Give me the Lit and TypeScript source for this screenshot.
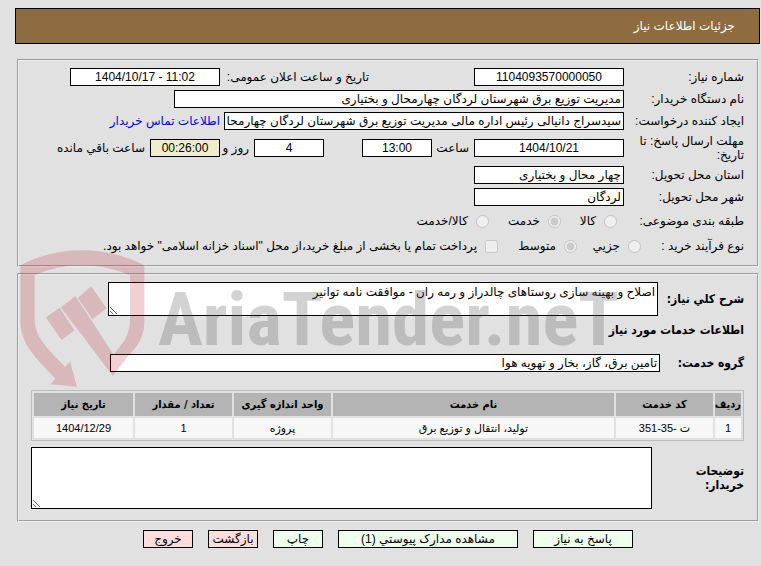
import { LitElement, html, css } from "lit";
import { customElement } from "lit/decorators.js";

const services = [
  { row: "1", code: "ت -35-351", name: "تولید، انتقال و توزیع برق", unit: "پروژه", qty: "1", date: "1404/12/29" },
];

@customElement("app-root")
export class AppRoot extends LitElement {
  static styles = css`
    :host {
      display: block;
      direction: rtl;
      position: relative;
      min-height: 100vh;
      box-sizing: border-box;
      padding-top: 8px;
      background: #e1e1e1;
      color: #000;
      font: 12px/14px Tahoma, "Liberation Sans", "DejaVu Sans", sans-serif;
    }
    * { box-sizing: border-box; }
    header {
      margin: 0 1px 15px 15px;
      padding: 0 24px;
      height: 36px;
      border: 1px solid #000;
      background: #8f6b40;
      color: #fff;
      display: flex;
      align-items: center;
    }
    h1, h2 { margin: 0; font-size: 12px; font-weight: normal; }
    h2, .strong, th {
      font-weight: bold;
      font-family: Tahoma, "DejaVu Sans Condensed", sans-serif;
    }
    fieldset {
      margin: 0 2px 6px 17px;
      padding: 5px 13px 7px 12px;
      border: 2px groove #f0f0f0;
      min-width: 0;
    }
    .row { display: flex; align-items: center; height: 22px; }
    .tall { height: 32px; }
    .choice { height: 26px; }
    .process { height: 24px; }
    .label { flex: none; width: 120px; padding-left: 8px; }
    .process .label { width: 96px; }
    input[type="text"], textarea, button {
      font: inherit;
      color: #000;
      border: 1px solid #000;
      border-radius: 0;
      margin: 0;
      background: #fff;
    }
    input[type="text"] { height: 18px; padding: 0 2px; min-width: 0; flex: none; width: 150px; }
    .center { text-align: center; }
    input.short { width: 70px; }
    input.wide { width: 450px; }
    input.creator { width: 400px; }
    .row input.remain { background: #eeeecc; }
    .published { width: 149px; margin-right: 105px; flex: none; }
    .unit { flex: none; padding: 0 5px; width: 42px; white-space: nowrap; }
    .row input.days { margin-right: 38px; }
    .days-unit { width: 34px; }
    .rest { padding: 0 5px; white-space: nowrap; }
    a { color: #0000ee; text-decoration: none; margin-right: 4px; white-space: nowrap; }
    .options { flex: 1; display: grid; grid-template-columns: 56px 72px 1fr; }
    .process .options { grid-template-columns: 64px 79px 1fr; }
    .option { display: flex; align-items: center; gap: 8px; padding-right: 7px; white-space: nowrap; }
    .option input { margin: 0; width: 13px; height: 13px; flex: none; }
    .need { padding-top: 7px; padding-bottom: 11px; margin-bottom: 8px; }
    .strong { flex: none; }
    .summary { display: flex; align-items: center; }
    .summary .strong { width: 86px; white-space: nowrap; }
    .summary textarea { width: 550px; height: 34px; }
    textarea { display: block; padding: 2px; resize: both; }
    .group { display: flex; align-items: center; margin: 17px 0 18px; }
    .group .strong { width: 84px; }
    .group input[type="text"] { width: 550px; }
    h2 { margin-top: 7px; }
    table {
      width: 100%;
      table-layout: fixed;
      border: 1px solid #bbb;
      border-collapse: separate;
      border-spacing: 2px;
      font-size: 11px;
      text-align: center;
      margin-bottom: 6px;
    }
    th { height: 23px; padding: 0; background: #b4b4b4; white-space: nowrap; }
    td { height: 20px; padding: 0; background: #f7f7f7; }
    .c-row { width: 26px; }
    .c-mid { width: 97px; }
    .c-date { width: 99px; }
    .notes { display: flex; align-items: center; }
    .notes .strong { width: 92px; padding-left: 36px; }
    .notes textarea { flex: 1; height: 62px; }
    .actions { display: flex; justify-content: center; gap: 15px; margin: 0 2px 0 17px; }
    button { width: 50px; height: 18px; padding: 0; background: #eeffee; white-space: nowrap; }
    button.answer { width: 100px; }
    button.files { width: 180px; }
    button.leave { background: #ffdddd; }
    .watermark {
      position: absolute;
      left: 17px;
      top: 247px;
      display: flex;
      align-items: center;
      direction: ltr;
      pointer-events: none;
    }
    .watermark svg { width: 133px; height: 143px; fill: #b81c28; opacity: 0.2; }
    .brand {
      margin-left: 8px;
      font: bold 75px/80px "Liberation Sans Narrow", "Roboto Condensed", "Open Sans Condensed", Roboto, sans-serif;
      color: #555;
      opacity: 0.26;
    }
  `;

  render() {
    return html`
      <header><h1>جزئیات اطلاعات نیاز</h1></header>
      <fieldset>
        <div class="row">
          <label class="label" for="num">شماره نیاز:</label>
          <input id="num" class="center" type="text" readonly value="1104093570000050">
          <label class="published" for="pub">تاریخ و ساعت اعلان عمومی:</label>
          <input id="pub" class="center" type="text" dir="ltr" readonly value="1404/10/17 - 11:02">
        </div>
        <div class="row">
          <label class="label" for="org">نام دستگاه خریدار:</label>
          <input id="org" class="wide" type="text" readonly value="مدیریت توزیع برق شهرستان لردگان چهارمحال و بختیاری">
        </div>
        <div class="row">
          <label class="label" for="creator">ایجاد کننده درخواست:</label>
          <input id="creator" class="creator" type="text" readonly value="سیدسراج دانیالی رئیس اداره مالی مدیریت توزیع برق شهرستان لردگان چهارمحال و بختیاری">
          <a href="#contact">اطلاعات تماس خریدار</a>
        </div>
        <div class="row tall">
          <label class="label" for="deadline">مهلت ارسال پاسخ: تا تاریخ:</label>
          <input id="deadline" class="center" type="text" readonly value="1404/10/21">
          <label class="unit" for="hour">ساعت</label>
          <input id="hour" class="center short" type="text" readonly value="13:00">
          <input id="days" class="center short days" type="text" readonly value="4">
          <label class="unit days-unit" for="days">روز و</label>
          <input id="remain" class="center short remain" type="text" readonly value="00:26:00">
          <label class="rest" for="remain">ساعت باقي مانده</label>
        </div>
        <div class="row">
          <label class="label" for="province">استان محل تحویل:</label>
          <input id="province" type="text" readonly value="چهار محال و بختیاری">
        </div>
        <div class="row">
          <label class="label" for="city">شهر محل تحویل:</label>
          <input id="city" type="text" readonly value="لردگان">
        </div>
        <div class="row choice">
          <span class="label">طبقه بندی موضوعی:</span>
          <div class="options">
            <label class="option"><input type="radio" name="kind" disabled>کالا</label>
            <label class="option"><input type="radio" name="kind" disabled checked>خدمت</label>
            <label class="option"><input type="radio" name="kind" disabled>کالا/خدمت</label>
          </div>
        </div>
        <div class="row process">
          <span class="label">نوع فرآیند خرید :</span>
          <div class="options">
            <label class="option"><input type="radio" name="process" disabled>جزیي</label>
            <label class="option"><input type="radio" name="process" disabled checked>متوسط</label>
            <label class="option"><input type="checkbox" disabled>پرداخت تمام یا بخشی از مبلغ خرید،از محل "اسناد خزانه اسلامی" خواهد بود.</label>
          </div>
        </div>
      </fieldset>
      <fieldset class="need">
        <div class="summary">
          <label class="strong" for="desc">شرح کلي نیاز:</label>
          <textarea id="desc" readonly .value=${"اصلاح و بهینه سازی روستاهای چالدراز و رمه ران - موافقت نامه توانیر"}></textarea>
        </div>
        <h2>اطلاعات خدمات مورد نیاز</h2>
        <div class="group">
          <label class="strong" for="grp">گروه خدمت:</label>
          <input id="grp" type="text" readonly value="تامین برق، گاز، بخار و تهویه هوا">
        </div>
        <table>
          <thead>
            <tr>
              <th class="c-row">ردیف</th><th class="c-mid">کد خدمت</th><th>نام خدمت</th>
              <th class="c-mid">واحد اندازه گیری</th><th class="c-mid">تعداد / مقدار</th><th class="c-date">تاریخ نیاز</th>
            </tr>
          </thead>
          <tbody>
            ${services.map((s) => html`<tr>
              <td>${s.row}</td><td>${s.code}</td><td>${s.name}</td><td>${s.unit}</td><td>${s.qty}</td><td>${s.date}</td>
            </tr>`)}
          </tbody>
        </table>
        <div class="notes">
          <label class="strong" for="notes">توضیحات خریدار:</label>
          <textarea id="notes" readonly></textarea>
        </div>
      </fieldset>
      <div class="actions">
        <button class="answer">پاسخ به نیاز</button>
        <button class="files">مشاهده مدارک پیوستي (1)</button>
        <button>چاپ</button>
        <button class="leave">بازگشت</button>
        <button class="leave">خروج</button>
      </div>
      <div class="watermark" aria-hidden="true">
        <svg viewBox="50 20 400 430">
          <path d="M60 75Q145 30 245 30T433 75V240C433 295 410 320 384 348L338 408L228 262L182 202L225 167L272 238L340 343C372 305 390 285 390 235V105Q320 75 245 75T103 105V235C103 290 140 325 195 380L210 365L230 440L152 433L165 415C120 365 60 320 60 240Z" />
          <path d="M137 232L178 203L223 270L184 300ZM233 173L273 138L319 204L277 237Z" />
        </svg>
        <span class="brand">AriaTender.neT</span>
      </div>
    `;
  }
}
